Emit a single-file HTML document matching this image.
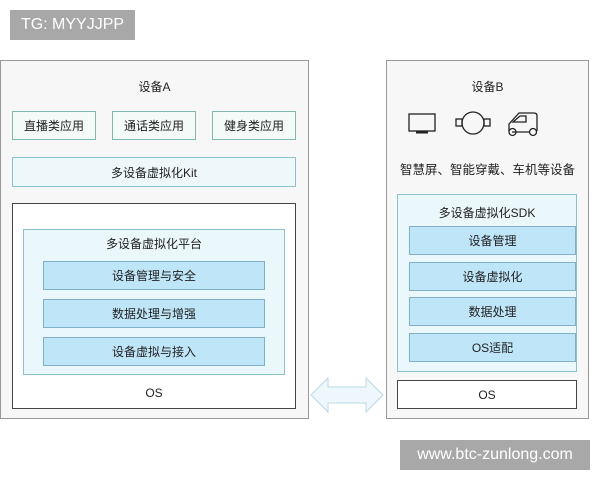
<!DOCTYPE html>
<html><head><meta charset="utf-8"><style>
body{margin:0;width:600px;height:480px;background:#fff;position:relative;overflow:hidden;font-family:"Liberation Sans","Noto Sans CJK SC",sans-serif;color:#222;font-size:12px}
.a{position:absolute;box-sizing:border-box;display:flex;align-items:center;justify-content:center}
.t{position:absolute;text-align:center}
.dev{background:#f7f7f7;border:1px solid #999}
.app{background:#f4faf8;border:1px solid #7fb8b0}
.kit{background:#eef8fb;border:1px solid #8cc0cc}
.pan{background:#eaf7fb;border:1px solid #8cc0cc}
.row{background:#bfe6f8;border:1px solid #7fb0c8}
.os{background:#fff;border:1px solid #444}
.wm{background:#a8a8a8;color:#fff}
</style></head><body>
<div class="a wm" style="left:10px;top:10px;width:125px;height:30px;font-size:16px">TG: MYYJJPP</div>
<div class="a dev" style="left:0;top:60px;width:309px;height:359px"></div>
<div class="t" style="left:0;top:78px;width:309px">设备A</div>
<div class="a app" style="left:12px;top:111px;width:84px;height:29px">直播类应用</div>
<div class="a app" style="left:112px;top:111px;width:84px;height:29px">通话类应用</div>
<div class="a app" style="left:212px;top:111px;width:84px;height:29px">健身类应用</div>
<div class="a kit" style="left:12px;top:157px;width:284px;height:30px">多设备虚拟化Kit</div>
<div class="a os" style="left:12px;top:203px;width:284px;height:206px;align-items:flex-end;padding-bottom:8px">OS</div>
<div class="a pan" style="left:23px;top:229px;width:262px;height:146px"></div>
<div class="t" style="left:23px;top:235px;width:262px">多设备虚拟化平台</div>
<div class="a row" style="left:43px;top:261px;width:222px;height:29px">设备管理与安全</div>
<div class="a row" style="left:43px;top:299px;width:222px;height:29px">数据处理与增强</div>
<div class="a row" style="left:43px;top:337px;width:222px;height:29px">设备虚拟与接入</div>

<svg style="position:absolute;left:308px;top:375px" width="80" height="42"><path d="M3 20 L20 3 L20 12 L58 12 L58 3 L75 20 L58 37 L58 28 L20 28 L20 37 Z" fill="#eef8fc" stroke="#b8d8e6"/></svg>

<div class="a dev" style="left:386px;top:60px;width:203px;height:359px"></div>
<div class="t" style="left:386px;top:78px;width:203px">设备B</div>
<svg style="position:absolute;left:405px;top:108px" width="140" height="34" fill="none" stroke="#222" stroke-width="1.3">
<rect x="4" y="6" width="26" height="17"/><line x1="11" y1="24.5" x2="23" y2="24.5" stroke-width="2"/>
<circle cx="68" cy="15" r="11"/><rect x="51" y="11" width="6" height="7"/><rect x="79" y="11" width="6" height="7"/>
<path d="M104 23 L104 16 L114 5 L129 5 Q132 5 132 8 L132 23 M107 24 L125 24"/><path d="M108 14 L115 8 L121 8 L121 14 Z"/><circle cx="107.5" cy="24" r="3.5"/><circle cx="128" cy="24" r="3.5"/>
</svg>
<div class="t" style="left:386px;top:159px;width:203px;font-size:12.5px">智慧屏、智能穿戴、车机等设备</div>
<div class="a pan" style="left:397px;top:194px;width:180px;height:178px"></div>
<div class="t" style="left:397px;top:204px;width:180px">多设备虚拟化SDK</div>
<div class="a row" style="left:409px;top:226px;width:167px;height:29px">设备管理</div>
<div class="a row" style="left:409px;top:262px;width:167px;height:29px">设备虚拟化</div>
<div class="a row" style="left:409px;top:297px;width:167px;height:29px">数据处理</div>
<div class="a row" style="left:409px;top:333px;width:167px;height:29px">OS适配</div>
<div class="a os" style="left:397px;top:380px;width:180px;height:29px">OS</div>
<div class="a wm" style="left:400px;top:440px;width:190px;height:30px;font-size:16px">www.btc-zunlong.com</div>
</body></html>
